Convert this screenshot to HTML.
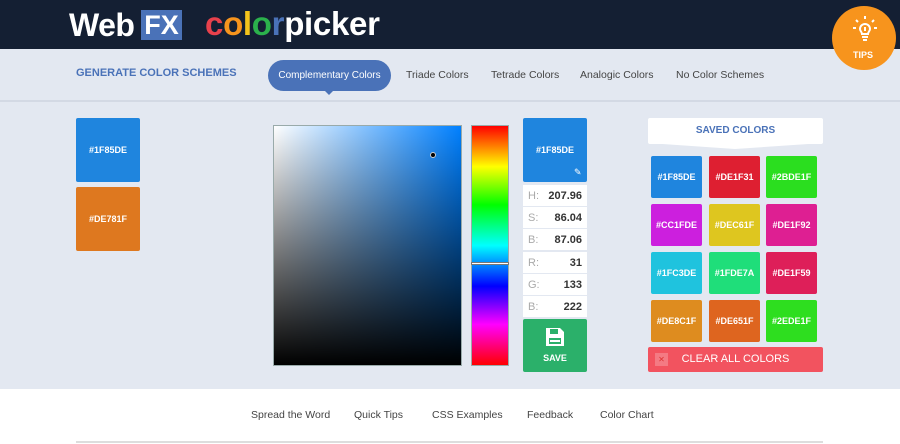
<!DOCTYPE html>
<html><head><style>
*{margin:0;padding:0;box-sizing:border-box}
body{width:900px;height:444px;overflow:hidden;font-family:"Liberation Sans",sans-serif;background:#fff;position:relative}
.a{position:absolute}
.hdr{left:0;top:0;width:900px;height:49px;background:#141f33}
.nav{left:0;top:49px;width:900px;height:53px;background:#e3e8f1;border-bottom:2px solid #d3d9e4}
.main{left:0;top:102px;width:900px;height:287px;background:#e3e8f1}
.sw{color:#fff;font-size:9px;font-weight:bold;display:flex;align-items:center;justify-content:center;border-radius:2px}
.fld{left:523px;width:64px;height:21px;background:#fff;font-size:11px;display:flex;justify-content:space-between;align-items:center;padding:0 5px}
.fld span:first-child{color:#aaa}
.fld span:last-child{font-weight:bold;color:#333}
.nl{top:69px;font-size:10.5px;color:#444}
.fl{top:409px;font-size:10.5px;color:#444}
</style></head><body>
<div class="a hdr"></div>
<div class="a" style="left:69px;top:7px;font-size:32px;font-weight:bold;color:#fff;letter-spacing:-0.5px">Web</div>
<div class="a" style="left:141px;top:10px;width:41px;height:30px;background:#4a72b8;color:#fff;font-size:27px;font-weight:bold;text-align:center;line-height:30px">FX</div>
<div class="a" style="left:205px;top:5px;font-size:33px;font-weight:bold;letter-spacing:-0.3px"><span style="color:#e8414c">c</span><span style="color:#f7941d">o</span><span style="color:#f4c31b">l</span><span style="color:#2bb24c">o</span><span style="color:#4a72b8">r</span><span style="color:#fff">picker</span></div>
<div class="a nav"></div>
<div class="a" style="left:76px;top:67px;font-size:11px;font-weight:bold;color:#4a72b8">GENERATE COLOR SCHEMES</div>
<div class="a" style="left:268px;top:60px;width:123px;height:31px;border-radius:16px;background:#4a72b8;color:#fff;font-size:10px;text-align:center;line-height:31px">Complementary Colors</div>
<div class="a" style="left:324px;top:90px;width:0;height:0;border-left:5px solid transparent;border-right:5px solid transparent;border-top:5px solid #4a72b8"></div>
<div class="a nl" style="left:406px">Triade Colors</div>
<div class="a nl" style="left:491px">Tetrade Colors</div>
<div class="a nl" style="left:580px">Analogic Colors</div>
<div class="a nl" style="left:676px">No Color Schemes</div>
<div class="a" style="left:832px;top:6px;width:64px;height:64px;border-radius:50%;background:#f7941d"></div>
<svg class="a" style="left:848px;top:12px" width="34" height="34" viewBox="0 0 34 34" fill="none" stroke="#fff" stroke-width="2"><path d="M12 17a5 5 0 1 1 10 0c0 2-2 3-2 5h-6c0-2-2-3-2-5z"/><path d="M14 25h6M15 28h4M17 4v3M8 8l2 2M26 8l-2 2M5 16h3M26 16h3"/><path d="M17 15v4"/></svg>
<div class="a" style="left:853px;top:50px;font-size:9px;font-weight:bold;color:#fff">TIPS</div>
<div class="a main"></div>
<div class="a sw" style="left:76px;top:118px;width:64px;height:64px;background:#1f85de">#1F85DE</div>
<div class="a sw" style="left:76px;top:187px;width:64px;height:64px;background:#de781f">#DE781F</div>
<div class="a" style="left:273px;top:125px;width:189px;height:241px;border:1px solid #9aa;background:linear-gradient(to bottom,rgba(0,0,0,0),#000),linear-gradient(to right,#fff,#0080ff)"></div>
<div class="a" style="left:430px;top:152px;width:6px;height:6px;border-radius:50%;background:#000;border:1px solid #ccc"></div>
<div class="a" style="left:471px;top:125px;width:38px;height:241px;border:1px solid #9aa;background:linear-gradient(to bottom,#f00,#ff0 17%,#0f0 33%,#0ff 50%,#00f 67%,#f0f 83%,#f00)"></div>
<div class="a" style="left:471px;top:262px;width:38px;height:3px;background:#fff;border:1px solid #777"></div>
<div class="a sw" style="left:523px;top:118px;width:64px;height:64px;background:#1f85de">#1F85DE</div>
<div class="a" style="left:574px;top:167px;color:#fff;font-size:9px">✎</div>
<div class="a fld" style="top:185px"><span>H:</span><span>207.96</span></div>
<div class="a fld" style="top:207px"><span>S:</span><span>86.04</span></div>
<div class="a fld" style="top:229px"><span>B:</span><span>87.06</span></div>
<div class="a fld" style="top:252px"><span>R:</span><span>31</span></div>
<div class="a fld" style="top:274px"><span>G:</span><span>133</span></div>
<div class="a fld" style="top:296px"><span>B:</span><span>222</span></div>
<div class="a" style="left:523px;top:319px;width:64px;height:53px;background:#2bb06a;border-radius:2px"></div>
<svg class="a" style="left:545px;top:327px" width="20" height="20" viewBox="0 0 20 20"><path d="M1 1h14l4 4v14H1z" fill="#fff"/><rect x="5" y="2" width="8" height="5" fill="#2bb06a"/><rect x="4" y="11" width="12" height="6" fill="#2bb06a"/><rect x="5" y="13" width="10" height="2" fill="#fff"/></svg>
<div class="a" style="left:523px;top:353px;width:64px;text-align:center;color:#fff;font-size:9px;font-weight:bold">SAVE</div>
<div class="a" style="left:648px;top:118px;width:175px;height:26px;background:#fff;border-radius:2px;color:#4a72b8;font-size:10px;font-weight:bold;text-align:center;line-height:26px">SAVED COLORS</div>
<div class="a" style="left:648px;top:143px;width:0;height:0;border-left:87px solid transparent;border-right:88px solid transparent;border-top:6px solid #fff"></div>
<div class="a sw" style="left:651px;top:156px;width:51px;height:42px;background:#1f85de">#1F85DE</div>
<div class="a sw" style="left:709px;top:156px;width:51px;height:42px;background:#de1f31">#DE1F31</div>
<div class="a sw" style="left:766px;top:156px;width:51px;height:42px;background:#2bde1f">#2BDE1F</div>
<div class="a sw" style="left:651px;top:204px;width:51px;height:42px;background:#cc1fde">#CC1FDE</div>
<div class="a sw" style="left:709px;top:204px;width:51px;height:42px;background:#dec61f">#DEC61F</div>
<div class="a sw" style="left:766px;top:204px;width:51px;height:42px;background:#de1f92">#DE1F92</div>
<div class="a sw" style="left:651px;top:252px;width:51px;height:42px;background:#1fc3de">#1FC3DE</div>
<div class="a sw" style="left:709px;top:252px;width:51px;height:42px;background:#1fde7a">#1FDE7A</div>
<div class="a sw" style="left:766px;top:252px;width:51px;height:42px;background:#de1f59">#DE1F59</div>
<div class="a sw" style="left:651px;top:300px;width:51px;height:42px;background:#de8c1f">#DE8C1F</div>
<div class="a sw" style="left:709px;top:300px;width:51px;height:42px;background:#de651f">#DE651F</div>
<div class="a sw" style="left:766px;top:300px;width:51px;height:42px;background:#2ede1f">#2EDE1F</div>
<div class="a" style="left:648px;top:347px;width:175px;height:25px;background:#f2535f;border-radius:2px"></div>
<div class="a" style="left:655px;top:353px;width:13px;height:13px;background:#f47a83;color:#d33;font-size:8px;text-align:center;line-height:13px">✕</div>
<div class="a" style="left:648px;top:347px;width:175px;height:25px;line-height:25px;text-align:center;color:#fff;font-size:11px">CLEAR ALL COLORS</div>
<div class="a fl" style="left:251px">Spread the Word</div>
<div class="a fl" style="left:354px">Quick Tips</div>
<div class="a fl" style="left:432px">CSS Examples</div>
<div class="a fl" style="left:527px">Feedback</div>
<div class="a fl" style="left:600px">Color Chart</div>
<div class="a" style="left:76px;top:441px;width:747px;height:2px;background:#ddd"></div>
</body></html>
